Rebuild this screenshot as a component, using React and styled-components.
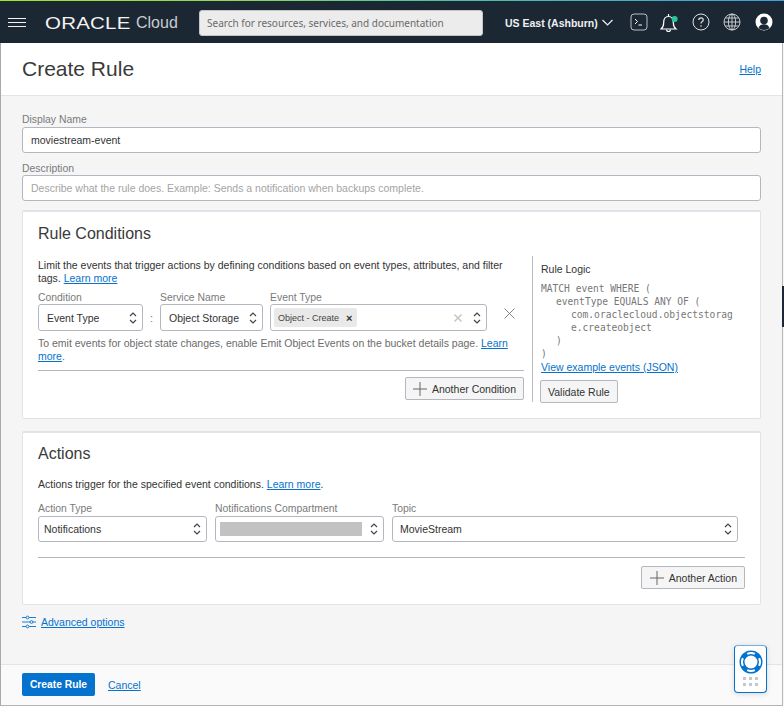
import React from 'react';
import styled, { createGlobalStyle } from 'styled-components';

const Global = createGlobalStyle`
  html, body { margin: 0; padding: 0; background: #f5f5f5; }
  body { font-family: "Liberation Sans", Arial, sans-serif; color: #333; overflow: hidden; }
  * { box-sizing: border-box; }
`;
const Page = styled.div`
  position: relative; width: 784px; height: 706px; display: flex; flex-direction: column; overflow: hidden;
`;
const Rainbow = styled.div`
  height: 1px; flex: none;
  background: linear-gradient(90deg, #a5e22f 0%, #8fd85a 30%, #4fc4a0 55%, #3f9fe0 100%);
`;
const TopBar = styled.header`
  height: 42px; flex: none; background: #1b2733; display: flex; align-items: center; padding: 0 0 0 8px;
`;
const Burger = styled.div`
  width: 18px; height: 9px; flex: none; display: flex; flex-direction: column; justify-content: space-between;
  span { display: block; height: 1px; background: #f2f2f2; }
`;
const Logo = styled.div`
  width: 154px; margin-left: 19px; margin-top: 2px; flex: none; display: flex; align-items: center; color: #f4f4f4; white-space: nowrap;
`;
const LogoWord = styled.span`
  display: inline-block; width: 91px; font-size: 16.5px; line-height: 16px; letter-spacing: .2px; transform: scale(1.24, 1); transform-origin: left center;
`;
const LogoCloud = styled.span`
  font-size: 16px; color: #c9ccd0;
`;
const Search = styled.div`
  width: 284px; height: 26px; flex: none; background: #ececec; border: 1px solid #c5c5c5; border-radius: 3px;
  display: flex; align-items: center; padding-left: 7px; font: 10px "Noto Sans", sans-serif; color: #6a6a6a;
  margin-top: 1px;
`;
const Region = styled.div`
  margin-left: 22px; width: 118px; flex: none; display: flex; align-items: center; gap: 4px; color: #eef0f2;
  font-size: 10.5px; font-weight: 700; white-space: nowrap; margin-top: 1px;
`;
const IconRow = styled.div`
  display: flex; align-items: center;
  svg { display: block; flex: none; }
`;
const Shell = styled.main`
  flex: 1; min-height: 0; display: flex; flex-direction: column; width: 783px;
  border-left: 1px solid #a9a9a9; border-right: 1px solid #b8b8b8; border-bottom: 1px solid #b0b4ba;
`;
const PageHead = styled.div`
  height: 53px; flex: none; background: #fff; border-bottom: 1px solid #e4e4e4; display: flex; align-items: center;
  justify-content: space-between; padding: 0 21px 0 21px;
`;
const Title = styled.h1`
  margin: 0; font-size: 21px; font-weight: 400; color: #3a3a3a;
`;
const A = styled.a`
  color: #0572ce; text-decoration: underline; font-size: ${p => p.$size || 'inherit'};
`;
const Body = styled.div`
  flex: 1; min-height: 0; background: #f5f5f5; padding: 17px 21px 0 21px; display: flex; flex-direction: column;
`;
const Label = styled.label`
  display: block; font-size: 10.4px; line-height: 13px; color: #7a7a7a; white-space: nowrap;
`;
const Input = styled.div`
  height: 26px; background: #fff; border: 1px solid #b3b8c0; border-radius: 3px; margin-top: ${p => p.$flush ? 0 : 1}px;
  display: flex; align-items: center; padding-left: 8px; font-size: 10.5px; color: ${p => p.$ph ? '#a4a4a4' : '#333'};
  margin-bottom: ${p => p.$mb || 0}px;
`;
const Card = styled.section`
  background: #fff; border: 1px solid #e2e3e8; border-top-width: 2px; border-radius: 2px; padding: ${p => p.$pt}px 15px 0;
  height: ${p => p.$h}px; margin-top: ${p => p.$mt}px; flex: none;
`;
const CardTitle = styled.h2`
  margin: 0; font-size: 16px; line-height: 20px; font-weight: 400; color: #3a3a3a;
`;
const Split = styled.div`
  display: flex; margin-top: 12px;
`;
const LeftCol = styled.div`
  width: 486px; flex: none; padding-top: 3px;
`;
const RightCol = styled.div`
  margin-left: 8px; height: 146px; width: 215px; border-left: 1px solid #b9bcc2; padding: 7px 0 0 8px; flex: none;
`;
const Para = styled.p`
  margin: ${p => p.$mt || 0}px 0 0; font-size: 10.5px; line-height: 13px; color: ${p => p.$muted ? '#6b6b6b' : '#333'};
`;
const Fields = styled.div`
  display: flex; align-items: flex-end; margin-top: ${p => p.$mt || 0}px;
`;
const Field = styled.div`
  width: ${p => p.$w}px; flex: none; margin-right: ${p => p.$mr || 0}px;
`;
const Select = styled.div`
  height: ${p => p.$h}px; background: #fff; border: 1px solid #b3b8c0; border-radius: 3px; margin-top: ${p => p.$tight ? 0 : 1}px;
  display: flex; align-items: center; justify-content: space-between; padding: 0 5px 0 ${p => p.$pl || 8}px;
  font-size: 10.5px; color: #333;
`;
const Colon = styled.span`
  width: 17px; flex: none; height: 27px; display: flex; align-items: center; justify-content: center; font-size: 11px; color: #777;
`;
const Chip = styled.span`
  height: 19px; background: #e9e9e9; border-radius: 2px; display: inline-flex; align-items: center; padding: 0 5px 0 4px;
  gap: 7px; font-size: 9px; color: #444; white-space: nowrap; b { font-size: 11px; color: #333; }
`;
const EventInner = styled.div`
  display: flex; align-items: center; gap: 11px; margin-left: auto;
`;
const CloseX = styled.div`
  margin: 0 0 12px 17px; line-height: 0;
`;
const Rule = styled.hr`
  border: 0; height: 1px; background: #b3b8c0; margin: ${p => p.$m};
`;
const ButtonRow = styled.div`
  display: flex; justify-content: flex-end;
`;
const Btn = styled.button`
  font-family: inherit; height: 23px; padding: 0 7px 0 ${p => p.$pl || 7}px; background: #f5f5f5; border: 1px solid #b3b8c0; border-radius: 2px;
  font-size: 10.5px; color: #333; display: inline-flex; align-items: center; gap: 5px; white-space: nowrap;
  margin-left: ${p => p.$ml || 0}px;
`;
const LogicTitle = styled.div`
  font-size: 10.5px; line-height: 13px; color: #333; margin-bottom: 6px;
`;
const Code = styled.div`
  font-family: "DejaVu Sans Mono", monospace; font-size: 9.6px; line-height: 13px; color: #777;
`;
const CodeLine = styled.div`
  padding-left: ${p => (p.$level || 0) * 15}px; white-space: pre;
`;
const LogicLink = styled.div`
  font-size: 10.5px; line-height: 14px; margin-bottom: 6px;
`;
const Advanced = styled.div`
  display: flex; align-items: center; gap: 5px; margin-top: 9px; font-size: 10.5px; line-height: 16px; height: 16px;
`;
const Footer = styled.footer`
  height: 41px; flex: none; background: #fafafa; border-top: 1px solid #e4e4e4; display: flex; align-items: center; padding: 0 21px 1px; gap: 13px;
`;
const Primary = styled.button`
  font-family: inherit; width: 73px; height: 23px; background: #0572ce; border: 0; border-radius: 2px; color: #fff; font-size: 10.3px; font-weight: 700; padding: 0;
`;
const HelpWidget = styled.div`
  position: absolute; left: 734px; top: 645px; width: 33px; height: 48px; background: #fff; border: 1px solid #0572ce; border-top-color: #6fb0e8; border-radius: 4px;
  box-shadow: 0 1px 5px rgba(0,0,0,.15); display: flex; flex-direction: column; align-items: center; padding-top: 4px; gap: 3px;
`;
const Dots = styled.div`
  display: grid; grid-template-columns: repeat(3, 3px); grid-auto-rows: 3px; gap: 3px 3px;
  span { background: #c4c7cc; }
`;
const RightTab = styled.div`
  position: absolute; left: 782px; top: 286px; width: 2px; height: 41px; background: #1b2733;
`;
const Redacted = styled.span`
  display: block; width: 142px; height: 14px; background: #c2c2c2;
`;

const Updown = ({ c = '#444' }) => (
  <svg width="8" height="14" viewBox="0 0 8 14" fill="none" stroke={c} strokeWidth="1.2">
    <path d="M1 5 4 2l3 3M1 9l3 3 3-3" />
  </svg>
);
const Plus = () => (
  <svg width="14" height="14" viewBox="0 0 14 14" stroke="#666" strokeWidth="1"><path d="M7 0v14M0 7h14" /></svg>
);

const SelectBox = ({ w, mr, label, h = 27, pl, tight, children }) => (
  <Field $w={w} $mr={mr}>
    <Label>{label}</Label>
    <Select $h={h} $pl={pl} $tight={tight}>{children}<Updown /></Select>
  </Field>
);

const TerminalIcon = () => (
  <svg width="18" height="18" viewBox="0 0 18 18" fill="none" stroke="#b9bdc2" style={{ marginLeft: 7 }}>
    <rect x="1" y="1" width="16" height="16" rx="3" />
    <path d="M5 6l2.500 2.500L5 11M8.500 12H12" stroke="#fff" />
  </svg>
);
const BellIcon = () => (
  <svg width="20" height="20" viewBox="0 0 20 20" fill="none" stroke="#fff" strokeWidth="1.200" style={{ marginLeft: 12 }}>
    <path d="M1 17h15c-2-1.500-2.700-3.500-2.700-6.500 0-3.500-1.800-6-4.800-6s-4.800 2.500-4.800 6c0 3-.7 5-2.700 6.500Z" />
    <path d="M8.500 2v2.500M6.500 17.500a2 2 0 0 0 4 0" />
    <circle cx="14.600" cy="7" r="3" fill="#2bc4a0" stroke="none" />
  </svg>
);
const HelpIcon = () => (
  <svg width="18" height="18" viewBox="0 0 18 18" fill="none" stroke="#dfe1e3" style={{ marginLeft: 12 }}>
    <circle cx="9" cy="9" r="8" />
    <path d="M6.800 7c0-1.300 1-2.100 2.200-2.100s2.200.8 2.200 2c0 1.800-2.200 1.700-2.200 3.600" strokeWidth="1.200" />
    <circle cx="9" cy="13" r=".8" fill="#dfe1e3" stroke="none" />
  </svg>
);
const GlobeIcon = () => (
  <svg width="18" height="18" viewBox="0 0 18 18" fill="none" stroke="#d4d6d9" strokeWidth=".9" style={{ marginLeft: 13 }}>
    <circle cx="9" cy="9" r="8" />
    <ellipse cx="9" cy="9" rx="3.600" ry="8" />
    <path d="M9 1v16M1 9h16M2.200 5h13.600M2.200 13h13.600" />
  </svg>
);
const UserIcon = () => (
  <svg width="18" height="18" viewBox="0 0 18 18" style={{ marginLeft: 14 }}>
    <circle cx="9" cy="9" r="8.500" fill="#fff" />
    <circle cx="9" cy="7.500" r="3.800" fill="#1b2733" />
    <path d="M3.500 15c1-3 3-3.800 5.500-3.800s4.500.8 5.500 3.800A8 8 0 0 1 9 17a8 8 0 0 1-5.500-2Z" fill="#1b2733" />
  </svg>
);
const Lifebuoy = () => (
  <svg width="24" height="24" viewBox="0 0 24 24" fill="none">
    <circle cx="12" cy="12" r="9" stroke="#0572ce" strokeWidth="5" />
    <path d="M8.200 3.840A9 9 0 0 1 15.800 3.840M20.160 8.200A9 9 0 0 1 20.160 15.800M15.800 20.160A9 9 0 0 1 8.200 20.160M3.840 15.800A9 9 0 0 1 3.840 8.200" stroke="#fff" strokeWidth="2" />
  </svg>
);
const SlidersIcon = () => (
  <svg width="14" height="14" viewBox="0 0 14 14" fill="none" stroke="#0572ce" strokeWidth=".9">
    <path d="M0 2.500h4M7 2.500h7M0 7h8M11 7h3M0 11.500h4M7 11.500h7" />
    <circle cx="5.500" cy="2.500" r="1.400" /><circle cx="9.500" cy="7" r="1.400" /><circle cx="5.500" cy="11.500" r="1.400" />
  </svg>
);

export default function App() {
  return (
    <Page>
      <Global />
      <Rainbow />
      <TopBar>
        <Burger><span /><span /><span /></Burger>
        <Logo><LogoWord>ORACLE</LogoWord><LogoCloud>Cloud</LogoCloud></Logo>
        <Search>Search for resources, services, and documentation</Search>
        <Region>
          US East (Ashburn)
          <svg width="11" height="7" viewBox="0 0 11 7" fill="none" stroke="#eef0f2" strokeWidth="1.200" style={{ flex: 'none' }}><path d="M.5 1l5 5 5-5" /></svg>
        </Region>
        <IconRow>
          <TerminalIcon /><BellIcon /><HelpIcon /><GlobeIcon /><UserIcon />
        </IconRow>
      </TopBar>
      <Shell>
        <PageHead>
          <Title>Create Rule</Title>
          <A $size="10.500px">Help</A>
        </PageHead>
        <Body>
          <Label>Display Name</Label>
          <Input $mb={9}>moviestream-event</Input>
          <Label>Description</Label>
          <Input $flush $ph>Describe what the rule does. Example: Sends a notification when backups complete.</Input>
          <Card $h={209} $mt={9} $pt={12}>
            <CardTitle>Rule Conditions</CardTitle>
            <Split>
              <LeftCol>
                <Para>
                  Limit the events that trigger actions by defining conditions based on event types, attributes, and filter
                  tags. <A>Learn more</A>
                </Para>
                <Fields $mt={6}>
                  <SelectBox w={105} tight label="Condition">Event Type</SelectBox>
                  <Colon>:</Colon>
                  <SelectBox w={103} mr={7} tight label="Service Name">Object Storage</SelectBox>
                  <Field $w={217}>
                    <Label>Event Type</Label>
                    <Select $h={27} $pl={3} $tight>
                      <Chip>Object - Create<b>×</b></Chip>
                      <EventInner>
                        <svg width="8" height="8" viewBox="0 0 8 8" stroke="#c2c2c2" strokeWidth="1.400"><path d="M.5.5l7 7M7.500.5l-7 7" /></svg>
                        <Updown />
                      </EventInner>
                    </Select>
                  </Field>
                  <CloseX>
                    <svg width="11" height="11" viewBox="0 0 11 11" stroke="#777" strokeWidth=".9"><path d="M.5.5l10 10M10.500.5l-10 10" /></svg>
                  </CloseX>
                </Fields>
                <Para $muted $mt={6}>
                  To emit events for object state changes, enable Emit Object Events on the bucket details page. <A>Learn more</A>.
                </Para>
                <Rule $m="7px 0 6px" />
                <ButtonRow>
                  <Btn><Plus />Another Condition</Btn>
                </ButtonRow>
              </LeftCol>
              <RightCol>
                <LogicTitle>Rule Logic</LogicTitle>
                <Code>
                  <CodeLine>MATCH event WHERE (</CodeLine>
                  <CodeLine $level={1}>eventType EQUALS ANY OF (</CodeLine>
                  <CodeLine $level={2}>com.oraclecloud.objectstorag</CodeLine>
                  <CodeLine $level={2}>e.createobject</CodeLine>
                  <CodeLine $level={1}>)</CodeLine>
                  <CodeLine>)</CodeLine>
                </Code>
                <LogicLink><A>View example events (JSON)</A></LogicLink>
                <Btn $ml={-1}>Validate Rule</Btn>
              </RightCol>
            </Split>
          </Card>
          <Card $h={174} $mt={12} $pt={11}>
            <CardTitle>Actions</CardTitle>
            <Para $mt={14}>Actions trigger for the specified event conditions. <A>Learn more</A>.</Para>
            <Fields $mt={11}>
              <SelectBox w={169} mr={8} h={26} pl={5} label="Action Type">Notifications</SelectBox>
              <SelectBox w={169} mr={8} h={26} pl={4} label="Notifications Compartment"><Redacted /></SelectBox>
              <SelectBox w={346} h={26} pl={7} label="Topic">MovieStream</SelectBox>
            </Fields>
            <Rule $m="15px 0 8px" />
            <ButtonRow>
              <Btn $pl={8}><Plus />Another Action</Btn>
            </ButtonRow>
          </Card>
          <Advanced><SlidersIcon /><A>Advanced options</A></Advanced>
        </Body>
        <Footer>
          <Primary>Create Rule</Primary>
          <A $size="10.500px">Cancel</A>
        </Footer>
      </Shell>
      <RightTab />
      <HelpWidget>
        <Lifebuoy />
        <Dots>{Array.from({ length: 6 }, (_, i) => <span key={i} />)}</Dots>
      </HelpWidget>
    </Page>
  );
}
